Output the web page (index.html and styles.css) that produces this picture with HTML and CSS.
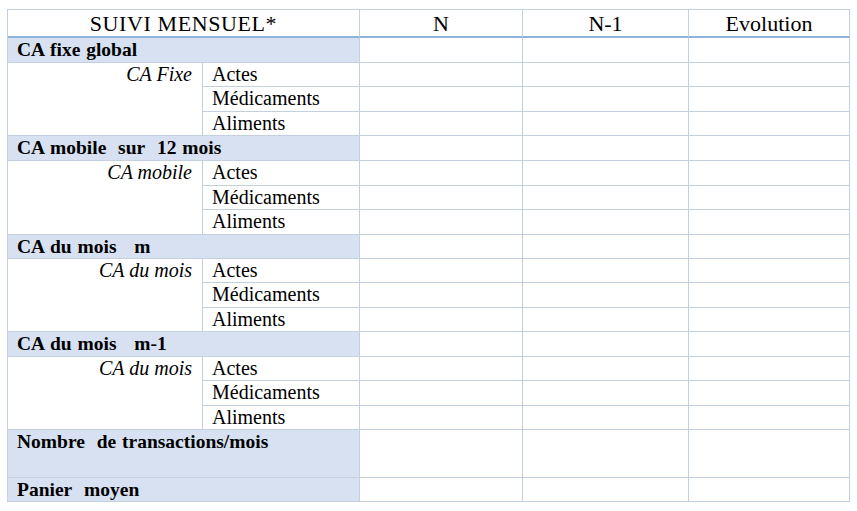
FILE: index.html
```html
<!DOCTYPE html>
<html lang="fr">
<head>
<meta charset="utf-8">
<title>Suivi mensuel</title>
<link rel="stylesheet" href="styles.css">
</head>
<body>
<div class="sheet">
  <div class="cell head title span2">SUIVI MENSUEL*</div>
  <div class="cell head">N</div>
  <div class="cell head">N-1</div>
  <div class="cell head">Evolution</div>

  <div class="cell sec span2">CA fixe global</div>
  <div class="cell"></div><div class="cell"></div><div class="cell"></div>
  <div class="cell group">CA Fixe</div>
  <div class="cell item">Actes</div><div class="cell"></div><div class="cell"></div><div class="cell"></div>
  <div class="cell item">Médicaments</div><div class="cell"></div><div class="cell"></div><div class="cell"></div>
  <div class="cell item">Aliments</div><div class="cell"></div><div class="cell"></div><div class="cell"></div>

  <div class="cell sec span2">CA mobile&nbsp; sur&nbsp; 12 mois</div>
  <div class="cell"></div><div class="cell"></div><div class="cell"></div>
  <div class="cell group">CA mobile</div>
  <div class="cell item">Actes</div><div class="cell"></div><div class="cell"></div><div class="cell"></div>
  <div class="cell item">Médicaments</div><div class="cell"></div><div class="cell"></div><div class="cell"></div>
  <div class="cell item">Aliments</div><div class="cell"></div><div class="cell"></div><div class="cell"></div>

  <div class="cell sec span2">CA du mois&nbsp;&nbsp; m</div>
  <div class="cell"></div><div class="cell"></div><div class="cell"></div>
  <div class="cell group">CA du mois</div>
  <div class="cell item">Actes</div><div class="cell"></div><div class="cell"></div><div class="cell"></div>
  <div class="cell item">Médicaments</div><div class="cell"></div><div class="cell"></div><div class="cell"></div>
  <div class="cell item">Aliments</div><div class="cell"></div><div class="cell"></div><div class="cell"></div>

  <div class="cell sec span2">CA du mois&nbsp;&nbsp; m-1</div>
  <div class="cell"></div><div class="cell"></div><div class="cell"></div>
  <div class="cell group">CA du mois</div>
  <div class="cell item">Actes</div><div class="cell"></div><div class="cell"></div><div class="cell"></div>
  <div class="cell item">Médicaments</div><div class="cell"></div><div class="cell"></div><div class="cell"></div>
  <div class="cell item">Aliments</div><div class="cell"></div><div class="cell"></div><div class="cell"></div>

  <div class="cell sec span2">Nombre&nbsp; de transactions/mois</div>
  <div class="cell"></div><div class="cell"></div><div class="cell"></div>
  <div class="cell sec span2">Panier&nbsp; moyen</div>
  <div class="cell"></div><div class="cell"></div><div class="cell"></div>
</div>
</body>
</html>
```

FILE: styles.css
```css
html, body {
  margin: 0;
  padding: 0;
  background: #ffffff;
}

body {
  padding: 9px 0 0 7px;
  color: #000000;
}

.sheet {
  display: grid;
  width: max-content;
  grid-template-columns: 195px 157px 163px 166px 161px;
  grid-template-rows: 28px 25px 24px 25px 24px 25px 25px 24px 25px 24px 24px 25px 24px 25px 24px 25px 24px 48px 24px;
  border-top: 1px solid #c3d0de;
  border-left: 1px solid #c3d0de;
}

.cell {
  box-sizing: border-box;
  border-right: 1px solid #c3d0de;
  border-bottom: 1px solid #c3d0de;
  font-family: "Liberation Serif", "Times New Roman", serif;
  font-size: 20px;
  line-height: 22px;
  white-space: nowrap;
  overflow: hidden;
}

.span2 {
  grid-column: span 2;
}

.head {
  border-bottom: 2px solid #8fb4dc;
  font-size: 22px;
  line-height: 24px;
  padding-top: 2px;
  text-align: center;
}

.title {
  letter-spacing: 0.6px;
}

.sec {
  background: #d8e1f1;
  font-size: 19.5px;
  font-weight: bold;
  word-spacing: 1px;
  padding: 1px 0 0 9px;
}

.group {
  grid-row: span 3;
  font-style: italic;
  text-align: right;
  padding-right: 10px;
}

.item {
  padding-left: 9px;
}
```
